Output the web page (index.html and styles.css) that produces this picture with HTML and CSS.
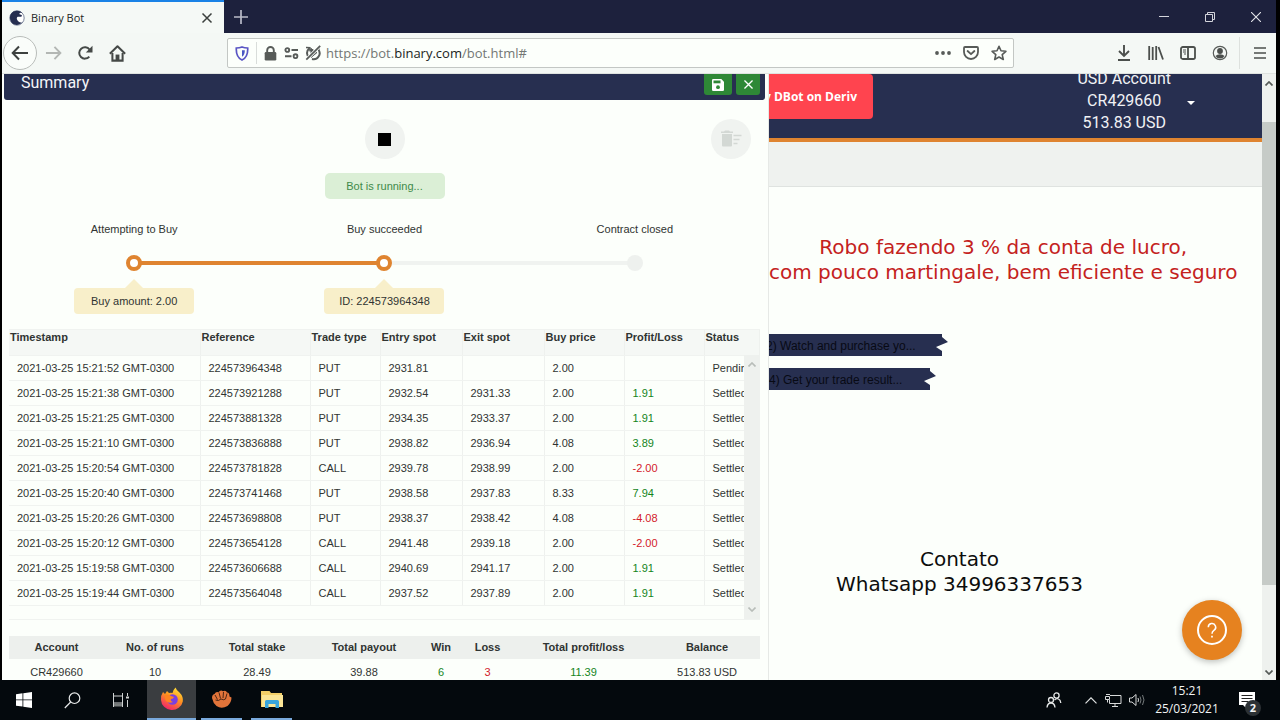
FILE: index.html
```html
<!DOCTYPE html>
<html lang="en">
<head>
<meta charset="utf-8">
<title>Binary Bot</title>
<link rel="stylesheet" href="styles.css">
</head>
<body>
<div class="browser">
  <header class="titlebar">
    <div class="tab">
      <svg class="favicon" viewBox="0 0 16 16" width="16" height="16"><circle cx="8" cy="8" r="7.2" fill="#fff" stroke="#7d869c"/><path d="M1.300 5C3 1.500 6 .7 8 .8 11 .8 12.500 2 13.300 3 11.500 2.600 10 3.200 10.500 4.200 13 4.600 13.500 6 12.500 6.500 11 7.200 9.500 6.300 8.300 7 7.200 8 8 10 9 11 10 12.200 12 12.600 13 12.500 10.500 15.500 6 15.800 3.300 13.300 1.500 11.500.2 8.500 1.300 5z" fill="#252e50"/></svg>
      <span class="tab-title">Binary Bot</span>
      <button class="icon-button tab-close" aria-label="Close tab"><svg viewBox="0 0 12 12" width="12" height="12"><path d="M1.500 1.500l9 9M10.500 1.500l-9 9" stroke="#3c403e" stroke-width="1.500"/></svg></button>
    </div>
    <button class="icon-button new-tab" aria-label="New tab"><svg viewBox="0 0 14 14" width="14" height="14"><path d="M7 0v14M0 7h14" stroke="#b9bbc8" stroke-width="1.700"/></svg></button>
    <div class="window-controls">
      <button class="icon-button" aria-label="Minimize"><svg viewBox="0 0 10 10" width="10" height="10"><path d="M0 4.500h10" stroke="#d4d5dc"/></svg></button>
      <button class="icon-button" aria-label="Restore"><svg viewBox="0 0 10 10" width="10" height="10" fill="none" stroke="#d4d5dc"><path d="M.5 2.500h7v7h-7zM2.500 2.500v-2h7v7h-2"/></svg></button>
      <button class="icon-button" aria-label="Close"><svg viewBox="0 0 10 10" width="10" height="10"><path d="M0 0l10 10M10 0L0 10" stroke="#e4e5ea" stroke-width="1.100"/></svg></button>
    </div>
  </header>

  <nav class="toolbar">
    <button class="icon-button tool back" aria-label="Back"><svg viewBox="0 0 18 16" width="18" height="16"><path d="M17 8H2M8 1.500L1.700 8 8 14.500" fill="none" stroke="#3d413f" stroke-width="2"/></svg></button>
    <button class="icon-button tool" aria-label="Forward"><svg viewBox="0 0 18 16" width="17" height="16"><path d="M1 8h15M10 1.500L16.300 8 10 14.500" fill="none" stroke="#b3b7b4" stroke-width="2"/></svg></button>
    <button class="icon-button tool" aria-label="Reload"><svg viewBox="0 0 16 16" width="16" height="16"><path d="M12.300 11.600A5.700 5.700 0 1 1 12.500 4.500" fill="none" stroke="#454947" stroke-width="2"/><path d="M15.500.8v6.700H8.800z" fill="#454947"/></svg></button>
    <button class="icon-button tool" aria-label="Home"><svg viewBox="0 0 16 16" width="17" height="17"><path d="M.8 8.200L8 1.200l7.200 7" fill="none" stroke="#454947" stroke-width="1.900" stroke-linejoin="round"/><path d="M3.200 7.500V14.700H12.800V7.500" fill="none" stroke="#454947" stroke-width="1.900"/><path d="M6.200 9h3.600v5.500H6.200z" fill="#454947"/></svg></button>

    <div class="urlbar">
      <button class="icon-button shield" aria-label="Tracking protection"><svg viewBox="0 0 14 15" width="14" height="15"><path d="M7 1C9 1.800 11 2 12.700 2 13 8 11.500 12 7 14 2.500 12 1 8 1.300 2 3 2 5 1.800 7 1z" fill="none" stroke="#5a55c4" stroke-width="1.700"/><path d="M7 4.200h2.800C9.800 7.500 9 9.500 7 10.800z" fill="#4a57c4"/></svg></button>
      <button class="icon-button site" aria-label="Secure connection"><svg viewBox="0 0 13 15" width="13" height="15"><path d="M3.200 7V4.300a3.300 3.300 0 0 1 6.600 0V7" fill="none" stroke="#575b58" stroke-width="1.900"/><rect x=".7" y="6" width="11.600" height="8.500" rx="1.300" fill="#575b58"/></svg></button>
      <button class="icon-button site" aria-label="Permissions"><svg viewBox="0 0 15 12" width="15" height="12" fill="none" stroke="#575b58" stroke-width="1.900"><circle cx="3.300" cy="3" r="1.900"/><path d="M7.500 3H14M1 9.200h6.500"/><circle cx="11.500" cy="9.200" r="1.900"/></svg></button>
      <button class="icon-button site" aria-label="Autoplay blocked"><svg viewBox="0 0 16 16" width="16" height="16" fill="none" stroke="#575b58"><path d="M4.200 3.500a5.800 5.800 0 0 0 .3 9.300M7 14a6 6 0 0 0 6.300-9.500" stroke-width="2"/><path d="M1 2.500l3.800.2.400 3.600M15 3.500l-2.500.3" stroke-width="1.700"/><path d="M6 3.500l6 4-6 5z" fill="#575b58"/><path d="M15 1L1.500 14.500" stroke="#fcfffb" stroke-width="3.200"/><path d="M15.200.8L1.300 14.700" stroke-width="1.700"/></svg></button>
      <div class="url" role="textbox" aria-label="Address">https://bot.<span class="domain">binary.com</span>/bot.html#</div>
      <button class="icon-button action" aria-label="Page actions"><svg viewBox="0 0 16 4" width="16" height="4" fill="#575b58"><circle cx="2" cy="2" r="1.900"/><circle cx="8" cy="2" r="1.900"/><circle cx="14" cy="2" r="1.900"/></svg></button>
      <button class="icon-button action" aria-label="Save to Pocket"><svg viewBox="0 0 16 14" width="16" height="14" fill="none" stroke="#575b58" stroke-width="1.800" stroke-linecap="round" stroke-linejoin="round"><path d="M2 1h12q1 0 1 1v4a7 7 0 0 1-14 0V2q0-1 1-1z"/><path d="M4.600 5L8 8.200 11.400 5"/></svg></button>
      <button class="icon-button action" aria-label="Bookmark"><svg viewBox="0 0 16 16" width="16" height="16"><path d="M8 1.300l2 4.500 4.900.5-3.700 3.300 1.100 4.900L8 12l-4.300 2.500 1.100-4.900L1.100 6.300 6 5.800z" fill="none" stroke="#575b58" stroke-width="1.600" stroke-linejoin="round"/></svg></button>
    </div>

    <button class="icon-button tool" aria-label="Downloads"><svg viewBox="0 0 14 16" width="14" height="16" fill="none" stroke="#4b4f4c" stroke-width="1.900"><path d="M7 0v11M2 6l5 5 5-5M1 15h12"/></svg></button>
    <button class="icon-button tool" aria-label="Library"><svg viewBox="0 0 16 14" width="16" height="14" fill="none" stroke="#4b4f4c" stroke-width="1.800"><path d="M1.200 0v14M4.700 1v13M8.200 0v14M10.500 1l4.500 12.500"/></svg></button>
    <button class="icon-button tool" aria-label="Sidebars"><svg viewBox="0 0 16 14" width="16" height="14" fill="none" stroke="#4b4f4c"><rect x="1" y="1" width="14" height="12" rx="1.800" stroke-width="1.800"/><path d="M8 1v12" stroke-width="1.800"/><path d="M3 4h3M3 6h3M4 8h2"/></svg></button>
    <button class="icon-button tool" aria-label="Account"><svg viewBox="0 0 16 16" width="16" height="16"><circle cx="8" cy="8" r="6.700" fill="none" stroke="#575b58" stroke-width="1.200"/><circle cx="8" cy="6" r="2.900" fill="#4b4f4c"/><path d="M3.500 11q1.500-1.800 4.500-1.800t4.500 1.800Q11 13.500 8 13.500T3.500 11z" fill="#4b4f4c"/></svg></button>
    <span class="tool-divider"></span>
    <button class="icon-button tool" aria-label="Menu"><svg viewBox="0 0 12 12" width="12" height="12"><path d="M0 1h12M0 6h12M0 11h12" stroke="#4b4f4c" stroke-width="1.700"/></svg></button>
  </nav>

  <main class="viewport">
    <section class="summary-panel">
      <header class="panel-header">
        <h1 class="panel-title">Summary</h1>
        <button class="panel-button save" aria-label="Save"><svg viewBox="0 0 12 12" width="12" height="12"><path d="M1.300 0H9.300L12 2.700V10.700Q12 12 10.700 12H1.300Q0 12 0 10.700V1.300Q0 0 1.300 0z" fill="#fff"/><path d="M1.500 1.500h7v2.800h-7z" fill="#2e8836"/><circle cx="6" cy="8.200" r="1.900" fill="#2e8836"/></svg></button>
        <button class="panel-button close" aria-label="Close summary"><svg viewBox="0 0 10 10" width="9" height="9"><path d="M.5.5l9 9M9.500.5l-9 9" stroke="#fff" stroke-width="1.500"/></svg></button>
      </header>

      <div class="panel-body">
        <div class="controls">
          <button class="round-button stop" aria-label="Stop"><span class="stop-icon"></span></button>
          <button class="round-button clear" aria-label="Clear log" disabled><svg viewBox="0 0 22 18" width="22" height="18"><path d="M1 1.500h3L5 .500h4l1 1h3v1.500H1zM2 4h10v11.500q0 1-1 1H3q-1 0-1-1z" fill="#d3d8d4"/><path d="M13.500 5.500h8M13.500 9.500h6M13.500 13.500h4" stroke="#d3d8d4" stroke-width="1.500"/></svg></button>
        </div>
        <p class="status-pill">Bot is running...</p>

        <ol class="steps">
          <li class="step done">
            <span class="step-label">Attempting to Buy</span>
            <span class="step-dot"></span>
            <span class="step-tip">Buy amount: 2.00</span>
          </li>
          <li class="step current">
            <span class="step-label">Buy succeeded</span>
            <span class="step-dot"></span>
            <span class="step-tip">ID: 224573964348</span>
          </li>
          <li class="step">
            <span class="step-label">Contract closed</span>
            <span class="step-dot"></span>
          </li>
        </ol>

        <div class="trades">
          <table class="trade-table">
            <colgroup><col class="c-time"><col class="c-ref"><col class="c-type"><col class="c-spot"><col class="c-spot"><col class="c-price"><col class="c-price"><col></colgroup>
            <thead><tr><th>Timestamp</th><th>Reference</th><th>Trade type</th><th>Entry spot</th><th>Exit spot</th><th>Buy price</th><th>Profit/Loss</th><th>Status</th></tr></thead>
            <tbody>
              <tr><td>2021-03-25 15:21:52 GMT-0300</td><td>224573964348</td><td>PUT</td><td>2931.81</td><td></td><td>2.00</td><td></td><td>Pending</td></tr>
              <tr><td>2021-03-25 15:21:38 GMT-0300</td><td>224573921288</td><td>PUT</td><td>2932.54</td><td>2931.33</td><td>2.00</td><td class="win">1.91</td><td>Settled</td></tr>
              <tr><td>2021-03-25 15:21:25 GMT-0300</td><td>224573881328</td><td>PUT</td><td>2934.35</td><td>2933.37</td><td>2.00</td><td class="win">1.91</td><td>Settled</td></tr>
              <tr><td>2021-03-25 15:21:10 GMT-0300</td><td>224573836888</td><td>PUT</td><td>2938.82</td><td>2936.94</td><td>4.08</td><td class="win">3.89</td><td>Settled</td></tr>
              <tr><td>2021-03-25 15:20:54 GMT-0300</td><td>224573781828</td><td>CALL</td><td>2939.78</td><td>2938.99</td><td>2.00</td><td class="loss">-2.00</td><td>Settled</td></tr>
              <tr><td>2021-03-25 15:20:40 GMT-0300</td><td>224573741468</td><td>PUT</td><td>2938.58</td><td>2937.83</td><td>8.33</td><td class="win">7.94</td><td>Settled</td></tr>
              <tr><td>2021-03-25 15:20:26 GMT-0300</td><td>224573698808</td><td>PUT</td><td>2938.37</td><td>2938.42</td><td>4.08</td><td class="loss">-4.08</td><td>Settled</td></tr>
              <tr><td>2021-03-25 15:20:12 GMT-0300</td><td>224573654128</td><td>CALL</td><td>2941.48</td><td>2939.18</td><td>2.00</td><td class="loss">-2.00</td><td>Settled</td></tr>
              <tr><td>2021-03-25 15:19:58 GMT-0300</td><td>224573606688</td><td>CALL</td><td>2940.69</td><td>2941.17</td><td>2.00</td><td class="win">1.91</td><td>Settled</td></tr>
              <tr><td>2021-03-25 15:19:44 GMT-0300</td><td>224573564048</td><td>CALL</td><td>2937.52</td><td>2937.89</td><td>2.00</td><td class="win">1.91</td><td>Settled</td></tr>
            </tbody>
          </table>
          <div class="trades-scrollbar">
            <svg viewBox="0 0 8 5" width="8" height="5"><path d="M.5 4.500L4 1l3.500 3.500" fill="none" stroke="#b8bdb9" stroke-width="1.600"/></svg>
            <svg viewBox="0 0 8 5" width="8" height="5"><path d="M.5.5L4 4 7.500.5" fill="none" stroke="#b8bdb9" stroke-width="1.600"/></svg>
          </div>
        </div>

        <table class="totals">
          <colgroup><col class="t-account"><col class="t-runs"><col class="t-runs"><col class="t-payout"><col class="t-win"><col class="t-loss"><col class="t-profit"><col></colgroup>
          <thead><tr><th>Account</th><th>No. of runs</th><th>Total stake</th><th>Total payout</th><th>Win</th><th>Loss</th><th>Total profit/loss</th><th>Balance</th></tr></thead>
          <tbody><tr><td>CR429660</td><td>10</td><td>28.49</td><td>39.88</td><td class="win">6</td><td class="loss">3</td><td class="win">11.39</td><td>513.83 USD</td></tr></tbody>
        </table>
      </div>
    </section>

    <section class="page">
      <header class="site-header">
        <div class="promo"><button class="promo-button">Try DBot on Deriv</button></div>
        <button class="account">
          <span class="account-lines"><span>USD Account</span><span>CR429660</span><span>513.83 USD</span></span>
          <span class="account-caret"></span>
        </button>
      </header>
      <div class="site-toolbar"></div>
      <div class="workspace">
        <p class="caption headline">Robo fazendo 3 % da conta de lucro,<br>com pouco martingale, bem eficiente e seguro</p>
        <div class="blocks">
          <div class="block block-watch">2) Watch and purchase yo...</div>
          <div class="block block-result">4) Get your trade result...</div>
        </div>
        <p class="caption contact">Contato<br>Whatsapp 34996337653</p>
      </div>
      <button class="help" aria-label="Help"><svg viewBox="0 0 32 32" width="32" height="32" fill="none" stroke="#fff"><circle cx="16" cy="16" r="14" stroke-width="2"/><path d="M12.300 13.300a3.700 3.700 0 1 1 5.600 3.100Q16 17.600 16 19.800" stroke-width="1.500"/><path d="M16 21.800v1.800" stroke-width="1.700"/></svg></button>
    </section>

    <div class="page-scrollbar">
      <svg viewBox="0 0 8 5" width="8" height="5"><path d="M.5 4.500L4 1l3.500 3.500" fill="none" stroke="#555a57" stroke-width="1.700"/></svg>
      <span class="thumb"></span>
      <svg viewBox="0 0 8 5" width="8" height="5"><path d="M.5.5L4 4 7.500.5" fill="none" stroke="#555a57" stroke-width="1.700"/></svg>
    </div>
  </main>
</div>

<footer class="taskbar">
  <button class="icon-button task" aria-label="Start"><svg viewBox="0 0 16 16" width="16" height="16" fill="#fff"><path d="M0 2.200L6.500 1.300V7.500H0zM7.300 1.200L16 0V7.500H7.300zM0 8.300H6.500V14.600L0 13.700zM7.300 8.300H16V16L7.300 14.800z"/></svg></button>
  <button class="icon-button task" aria-label="Search"><svg viewBox="0 0 17 17" width="17" height="17" fill="none" stroke="#e8eaea" stroke-width="1.200"><circle cx="10.500" cy="6.200" r="5.300"/><path d="M6.700 10L.8 16"/></svg></button>
  <button class="icon-button task" aria-label="Task view"><svg viewBox="0 0 17 16" width="17" height="16" fill="none" stroke="#d0d3d3"><path d="M1.500 1v3h9V1M1.500 15v-4h9v4M1.500 4v7M10.500 4v7M15.500 1v3M15.500 8v7"/><path d="M2 13h8" stroke="#777b7b" stroke-width="3"/><path d="M14 5.500h3" stroke-width="2"/></svg></button>
  <button class="icon-button task running active" aria-label="Firefox"><svg viewBox="0 0 24 24" width="24" height="24"><defs><linearGradient id="fox" x1=".8" y1="0" x2=".3" y2="1"><stop offset="0" stop-color="#ffe53b"/><stop offset=".45" stop-color="#ff9420"/><stop offset="1" stop-color="#f0206c"/></linearGradient></defs><path d="M3 5l2 2 2-3 2 2q2-.5 3.500 0Q13 3 15.500.500q1 3 4 5 4 4 3.300 9A11 10.500 0 0 1 1 13Q.5 8.500 3 5z" fill="url(#fox)"/><circle cx="12.500" cy="12.500" r="5.300" fill="#7a3fe0"/><path d="M5 8q4-1 6 1l3 1q-.5 2-3 2-1 2 2 3-4 2-7-1-2-3-1-6z" fill="#ff8420"/></svg></button>
  <button class="icon-button task running small" aria-label="Fist app"><svg viewBox="0 0 20 18" width="20" height="18"><path d="M0 8Q0 4.500 2.500 4 4 1 6.500 2.300 8.500-.5 11 1.300q3-1.300 4 1.200 2.500 0 2.500 4L19.500 7.500q0 5-4 8.500-6 3.500-11 0Q1 13 0 8z" fill="#e2743a"/><path d="M3 5l2.500 4.500M7 2.500l1.500 6M11.500 2l-.5 6M15 3.500L13.500 9M3.500 10q3 1.500 5.500-1 3 1.500 4.500 0" fill="none" stroke="#3a1c10" stroke-width=".9"/></svg></button>
  <button class="icon-button task running small" aria-label="File Explorer"><svg viewBox="0 0 22 18" width="22" height="18"><path d="M0 1h8.500l1.500 2H21v14H0z" fill="#f3cf68"/><path d="M1 5h21v12H1z" fill="#fbe596"/><path d="M4 18v-6.500Q4 10 5.500 10h11q1.500 0 1.500 1.500V18h-3.500v-4h-7v4z" fill="#39a5dc"/></svg></button>

  <div class="tray">
    <button class="icon-button people" aria-label="People"><svg viewBox="0 0 16 16" width="16" height="16" fill="none" stroke="#e6e8e8" stroke-width="1.300"><circle cx="10.500" cy="3.500" r="2.600"/><path d="M8.500 8q2-2 4-1 2 .8 2.300 4"/><circle cx="5" cy="8" r="2.500"/><path d="M1 15.500q.5-4.500 4-4.500t4 4.500"/></svg></button>
    <button class="icon-button tray-item" aria-label="Show hidden icons"><svg viewBox="0 0 12 7" width="12" height="7"><path d="M.5 6.300L6 .8l5.500 5.500" fill="none" stroke="#dfe1e1" stroke-width="1.200"/></svg></button>
    <button class="icon-button tray-item" aria-label="Network"><svg viewBox="0 0 17 13" width="17" height="13" fill="none" stroke="#d8dada"><path d="M5 1.500h11v8H4.500V6M7 12.500h6M10 9.500v3M1 .5h4M.5 2.500h4v3h-4zM2.500 5.500v3"/></svg></button>
    <button class="icon-button tray-item" aria-label="Volume"><svg viewBox="0 0 16 14" width="16" height="14" fill="none" stroke="#d8dada"><path d="M.5 5v4H3l4 3.500v-11L3 5z"/><path d="M9 5q1 2 0 4"/><path d="M11 3.500q2 3.500 0 7M13.500 2q3 5 0 10" stroke="#74797a"/></svg></button>
    <div class="clock"><time>15:21</time><time>25/03/2021</time></div>
    <button class="icon-button notifications" aria-label="2 notifications"><svg viewBox="0 0 16 17" width="16" height="17"><path d="M0 0h16v13H8v4l-4-4H0z" fill="#fff"/><path d="M2.500 3.500h11M2.500 6.500h11M2.500 9.500h7" stroke="#222"/></svg><span class="badge">2</span></button>
  </div>
</footer>
</body>
</html>
```
FILE: styles.css
```css
* { box-sizing: border-box; }

body {
  margin: 0;
  height: 100vh;
  display: flex;
  flex-direction: column;
  overflow: hidden;
  background: #000;
  color: #303432;
  font: 11px/16px "Liberation Sans", Arial, sans-serif;
}

p, h1, ol { margin: 0; padding: 0; }
button { font: inherit; color: inherit; border: 0; padding: 0; background: none; }
svg { display: block; flex: none; }

.icon-button { display: flex; align-items: center; justify-content: center; flex: none; }

.browser {
  flex: 1;
  min-height: 0;
  display: flex;
  flex-direction: column;
  margin: 0 4px 0 2px;
  background: #fcfffb;
}

/* Title bar */
.titlebar { display: flex; height: 33px; flex: none; background: #1d213d; }
.tab {
  display: flex;
  align-items: center;
  width: 222px;
  padding: 0 10px 0 7px;
  gap: 6px;
  background: #f5f9f6;
  border-top: 2px solid #1a82e6;
  color: #1c1f1d;
  font: 11px/16px "Open Sans", sans-serif;
}
.tab-title { flex: 1; }
.tab-close { width: 14px; height: 16px; }
.new-tab { width: 34px; }
.window-controls { display: flex; gap: 6px; margin-left: auto; }
.window-controls .icon-button { width: 40px; }

/* Toolbar */
.toolbar {
  display: flex;
  align-items: center;
  flex: none;
  height: 41px;
  padding-left: 1px;
  background: #f4f8f5;
  border-bottom: 1px solid #dfe3e0;
}
.tool { width: 32px; height: 32px; }
.back { width: 34px; height: 34px; border: 1px solid #b9bdba; border-radius: 50%; background: #fafdfa; }
.tool-divider { width: 1px; height: 32px; margin: 0 4px 0 3px; background: #dde1de; }
.urlbar {
  flex: 1;
  display: flex;
  align-items: center;
  height: 30px;
  margin: 0 94px;
  border: 1px solid #c3c7c4;
  border-radius: 2px;
  background: #fcfffb;
}
.shield { width: 29px; height: 22px; margin-right: 3px; border-right: 1px solid #d9ddda; }
.site { width: 21px; }
.action { width: 28px; }
.url { flex: 1; padding-left: 3px; color: #737774; font: 13px/20px "Open Sans", sans-serif; }
.domain { color: #1b1e1c; }

/* Page area */
.viewport { flex: 1; min-height: 0; display: flex; overflow: hidden; }

.summary-panel {
  flex: 0 0 767px;
  overflow: hidden;
  border-right: 1px solid #e6e9e6;
  background: #fcfffb;
}
.panel-header {
  display: flex;
  align-items: flex-start;
  height: 26px;
  margin: 0 3px 0 2px;
  padding: 0 5px 0 17px;
  gap: 4px;
  border-radius: 0 0 3px 3px;
  background: #272f50;
}
.panel-title { flex: 1; color: #f4f5f8; font: 16px/18px Roboto, sans-serif; }
.panel-button {
  display: flex;
  align-items: center;
  justify-content: center;
  height: 21px;
  border-radius: 0 0 3px 3px;
  background: #2e8836;
}
.save { width: 28px; }
.close { width: 24px; }
.panel-body { padding: 19px 8px 0 7px; }
.controls { display: grid; grid-template-columns: 1fr 40px 1fr; padding: 0 9px; }
.round-button {
  display: flex;
  align-items: center;
  justify-content: center;
  width: 40px;
  height: 40px;
  border-radius: 50%;
  background: #f0f3f0;
}
.stop { grid-column: 2; }
.clear { grid-column: 3; justify-self: end; }
.stop-icon { width: 13px; height: 13px; background: #000; }
.status-pill {
  width: 120px;
  margin: 14px auto 0;
  padding: 5px 0;
  border-radius: 5px;
  background: #dbefd6;
  color: #3f8a49;
  text-align: center;
}

/* Contract progress */
.steps { display: grid; grid-template-columns: repeat(3, 1fr); margin-top: 22px; list-style: none; }
.step { position: relative; display: flex; flex-direction: column; align-items: center; }
.step-dot { z-index: 1; width: 16px; height: 16px; margin-top: 18px; border-radius: 50%; background: #eef1ee; }
.step::before { content: ""; position: absolute; top: 40px; left: 50%; width: 100%; height: 4px; background: #f0f3f0; }
.step:last-child::before { display: none; }
.done::before { background: #df8430; }
.done .step-dot, .current .step-dot { border: 4px solid #df8430; background: #fff; }
.step-tip {
  position: relative;
  width: 120px;
  margin-top: 17px;
  padding: 5px 0;
  border-radius: 4px;
  background: #f8efca;
  text-align: center;
}
.step-tip::before {
  content: "";
  position: absolute;
  top: -9px;
  left: 50%;
  margin-left: -10px;
  border: 10px solid transparent;
  border-top: 0;
  border-bottom-color: #f8efca;
}

/* Tables */
table { width: 100%; table-layout: fixed; border-collapse: collapse; }
.trades { position: relative; margin-top: 15px; padding-bottom: 13px; border: 1px solid #f0f3f0; border-width: 1px 0; }
.trade-table th { height: 25px; padding: 0 0 3px 1px; background: #f5f8f5; vertical-align: top; line-height: 14px; text-align: left; }
.trade-table td { height: 25px; padding: 0 0 0 8px; line-height: 16px; }
.trade-table th, .trade-table td { border-right: 1px solid #eef1ee; border-bottom: 1px solid #f0f3f0; white-space: nowrap; }
.c-time { width: 191px; }
.c-ref { width: 110px; }
.c-type { width: 70px; }
.c-spot { width: 82px; }
.c-price { width: 80px; }
.win { color: #14851c; }
.loss { color: #d3202a; }
.trades-scrollbar {
  position: absolute;
  top: 25px;
  right: 0;
  bottom: 0;
  display: flex;
  flex-direction: column;
  justify-content: space-between;
  align-items: center;
  width: 16px;
  padding: 7px 0;
  background: #eef1ee;
}

.totals { margin-top: 16px; text-align: center; }
.totals th { height: 23px; padding: 0; background: #edf0ed; }
.totals td { height: 26px; padding: 0; }
.t-account { width: 95px; }
.t-runs { width: 102px; }
.t-payout { width: 112px; }
.t-win { width: 42px; }
.t-loss { width: 51px; }
.t-profit { width: 141px; }

/* Site behind the panel */
.page { position: relative; flex: 1; min-width: 0; display: flex; flex-direction: column; overflow: hidden; }
.site-header {
  display: flex;
  justify-content: space-between;
  flex: none;
  height: 68px;
  overflow: hidden;
  border-bottom: 4px solid #df8430;
  background: #272f50;
}
.promo { display: flex; justify-content: flex-end; width: 104px; height: 45px; overflow: hidden; }
.promo-button {
  flex: none;
  padding: 0 16px;
  border-radius: 4px;
  background: #ff444f;
  color: #fff;
  font: bold 12px/16px "Open Sans", sans-serif;
}
.account { display: flex; align-items: flex-end; gap: 16px; padding: 0 67px 4px 0; color: #f1f2f5; font: 16px/22px Roboto, sans-serif; }
.account-lines { display: flex; flex-direction: column; text-align: center; }
.account-caret { margin-bottom: 29px; border: 4px solid transparent; border-top-color: #fff; border-bottom: 0; }
.site-toolbar { flex: none; height: 45px; border-bottom: 1px solid #dfe3e0; background: #eff2ef; }
.workspace { display: flex; flex-direction: column; align-items: flex-start; padding-top: 48px; }
.caption { font: 20px/25px "DejaVu Sans", Verdana, sans-serif; text-align: center; white-space: nowrap; }
.headline { color: #c4221d; }
.blocks { display: flex; flex-direction: column; align-items: flex-start; gap: 12px; margin-top: 49px; }
.block {
  height: 22px;
  background: #272f50;
  color: #080a14;
  font: 12px/24px "Liberation Sans", Arial, sans-serif;
  white-space: nowrap;
  clip-path: polygon(0 0, calc(100% - 6px) 0, calc(100% - 6px) 3px, 100% 8px, calc(100% - 12px) 13px, calc(100% - 6px) 17px, calc(100% - 6px) 100%, 0 100%);
}
.block-watch { width: 179px; text-indent: -3px; }
.block-result { width: 167px; }
.contact { margin: 157px 0 0 67px; color: #0c0d0c; }
.help {
  position: absolute;
  right: 20px;
  bottom: 20px;
  display: flex;
  align-items: center;
  justify-content: center;
  width: 60px;
  height: 60px;
  border-radius: 50%;
  background: #e6821f;
  box-shadow: 0 2px 6px rgba(0, 0, 0, 0.25);
}
.page-scrollbar {
  flex: 0 0 14px;
  display: flex;
  flex-direction: column;
  align-items: center;
  gap: 36px;
  padding: 7px 0 5px;
  background: #eef1ee;
}
.thumb { flex: 1; width: 100%; margin-bottom: 49px; background: #c6cbc7; }

/* Taskbar */
.taskbar { display: flex; flex: none; height: 40px; background: #04090d; }
.task { width: 48px; }
.running { width: 49px; margin-left: 3px; border-bottom: 2px solid #79a9dc; }
.active { margin-right: 2px; background: #3a3d40; }
.small { width: 41px; margin-right: 6px; }
.tray { display: flex; margin-left: auto; padding-right: 12px; color: #f2f4f4; }
.people { width: 32px; margin-right: 9px; }
.tray-item { width: 23px; }
.clock { display: flex; flex-direction: column; width: 78px; padding-top: 2px; font: 12px/18px "Open Sans", sans-serif; text-align: center; }
.notifications { position: relative; width: 42px; }
.badge {
  position: absolute;
  top: 20px;
  right: 7px;
  width: 16px;
  height: 16px;
  border-radius: 50%;
  background: #2c3134;
  font: bold 11px/16px "Open Sans", sans-serif;
  text-align: center;
}
```
